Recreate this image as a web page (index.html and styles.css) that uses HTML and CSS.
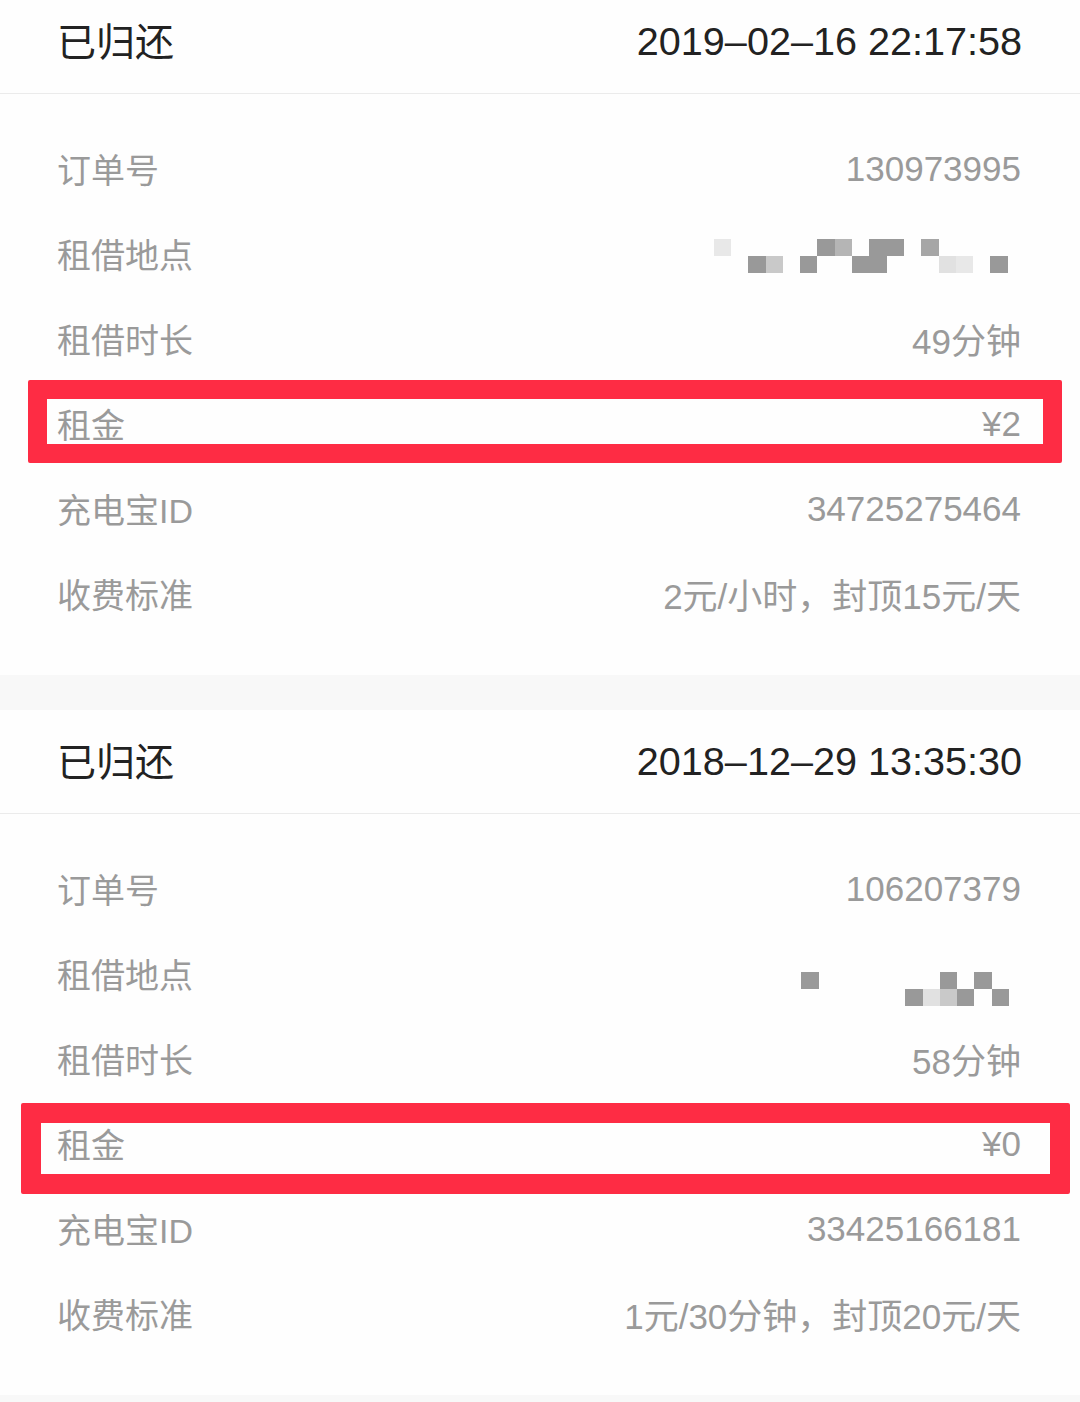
FILE: index.html
```html
<!DOCTYPE html>
<html lang="zh-CN">
<head>
<meta charset="utf-8">
<title>租借记录</title>
<link rel="stylesheet" href="styles.css">
</head>
<body>
<div class="page">
  <section class="card card-first">
    <div class="card-head">
      <span class="status">已归还</span>
      <span class="time">2019–02–16 22:17:58</span>
    </div>
    <div class="card-body">
      <div class="row"><span class="label">订单号</span><span class="value">130973995</span></div>
      <div class="row"><span class="label">租借地点</span>
        <span class="mosaic mosaic-a">
          <i class="c5"></i><i></i><i></i><i></i><i></i><i></i><i class="c1"></i><i class="c3"></i><i></i><i class="c1"></i><i class="c1"></i><i></i><i class="c2"></i><i></i><i></i><i></i><i></i><i></i>
          <i></i><i></i><i class="c1"></i><i class="c4"></i><i></i><i class="c1"></i><i></i><i></i><i class="c1"></i><i class="c1"></i><i></i><i></i><i></i><i class="c6"></i><i class="c5"></i><i></i><i class="c1"></i><i></i>
        </span>
      </div>
      <div class="row"><span class="label">租借时长</span><span class="value">49分钟</span></div>
      <div class="row row-marked"><span class="label">租金</span><span class="value">¥2</span><span class="mark mark-a"></span></div>
      <div class="row"><span class="label">充电宝ID</span><span class="value">34725275464</span></div>
      <div class="row"><span class="label">收费标准</span><span class="value">2元/小时，封顶15元/天</span></div>
    </div>
  </section>
  <div class="gap"></div>
  <section class="card card-second">
    <div class="card-head">
      <span class="status">已归还</span>
      <span class="time">2018–12–29 13:35:30</span>
    </div>
    <div class="card-body">
      <div class="row"><span class="label">订单号</span><span class="value">106207379</span></div>
      <div class="row"><span class="label">租借地点</span>
        <span class="mosaic mosaic-b">
          <i class="c1"></i><i></i><i></i><i></i><i></i><i></i><i></i><i></i><i class="c1"></i><i></i><i class="c1"></i><i></i>
          <i></i><i></i><i></i><i></i><i></i><i></i><i class="c1"></i><i class="c6"></i><i class="c4"></i><i class="c1"></i><i></i><i class="c1"></i>
        </span>
      </div>
      <div class="row"><span class="label">租借时长</span><span class="value">58分钟</span></div>
      <div class="row row-marked"><span class="label">租金</span><span class="value">¥0</span><span class="mark mark-b"></span></div>
      <div class="row"><span class="label">充电宝ID</span><span class="value">33425166181</span></div>
      <div class="row"><span class="label">收费标准</span><span class="value">1元/30分钟，封顶20元/天</span></div>
    </div>
  </section>
  <div class="gap"></div>
</div>
</body>
</html>
```

FILE: styles.css
```css
* { box-sizing: border-box; }
html, body {
  margin: 0;
  padding: 0;
  background: #f8f8f8;
}
body {
  font-family: "Liberation Sans", "Noto Sans CJK SC", sans-serif;
  width: 1080px;
  height: 1402px;
  overflow: hidden;
}
.page {
  margin-top: -10px;
}
.card {
  background: #fefefe;
}
.card-head {
  height: 104px;
  display: flex;
  align-items: center;
  justify-content: space-between;
  padding: 0 58px 0 57px;
  border-bottom: 1px solid #ebebeb;
  color: #222;
}
.status {
  font-size: 39px;
  font-family: "Noto Sans CJK SC", sans-serif;
  margin-bottom: 5px;
}
.time {
  font-size: 39.6px;
}
.card-body {
  padding: 32px 0 39px;
}
.row {
  position: relative;
  height: 85px;
  display: flex;
  align-items: center;
  justify-content: space-between;
  padding: 0 59px 0 57px;
  color: #9a9a9a;
}
.label {
  font-size: 34px;
}
.value {
  font-size: 35px;
}
.mosaic {
  display: grid;
  grid-auto-rows: 17px;
  margin-top: 4px;
}
.mosaic i {
  display: block;
  background: transparent;
}
.mosaic-a {
  grid-template-columns: repeat(18, 17.3px);
  margin-right: -4px;
}
.mosaic-b {
  grid-template-columns: repeat(12, 17.3px);
  margin-right: 12px;
  margin-top: 30px;
}
.mosaic .c1 { background: #999999; }
.mosaic .c2 { background: #a6a6a6; }
.mosaic .c3 { background: #b5b5b5; }
.mosaic .c4 { background: #c9c9c9; }
.mosaic .c5 { background: #e8e8e8; }
.mosaic .c6 { background: #e1e1e1; }
.mark {
  position: absolute;
  border: 19px solid #fe2c44;
  border-radius: 2px;
  pointer-events: none;
}
.mark-a {
  left: 28px;
  right: 18px;
  top: -1px;
  height: 83px;
}
.mark-b {
  left: 21px;
  right: 10px;
  top: 2px;
  height: 91px;
  border-width: 20px;
}
.gap {
  height: 35px;
}
```
